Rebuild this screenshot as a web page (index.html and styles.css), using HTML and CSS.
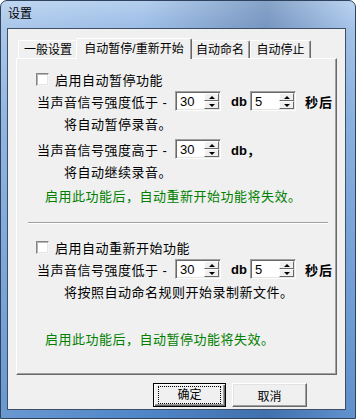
FILE: index.html
```html
<!DOCTYPE html>
<html lang="zh-CN">
<head>
    <meta charset="UTF-8">
    <title>设置</title>
    <link rel="stylesheet" href="styles.css">
</head>
<body>
    <div class="window">
        <div class="titlebar">设置</div>
        <div class="client">
            <div class="tabs">
                <div class="tab tab-general">一般设置</div>
                <div class="tab tab-pause active">自动暂停/重新开始</div>
                <div class="tab tab-name">自动命名</div>
                <div class="tab tab-stop">自动停止</div>
            </div>
            <div class="panel">
                <!-- auto pause -->
                <div class="check-row first"><span class="checkbox"></span>启用自动暂停功能</div>
                <div class="spin-row">
                    <span class="cond">当声音信号强度低于 -</span>
                    <span class="spinner"><span class="value">30</span><span class="spin-btn"><span class="up"></span><span class="down"></span></span></span>
                    <b class="unit">db</b>
                    <span class="spinner"><span class="value">5</span><span class="spin-btn"><span class="up"></span><span class="down"></span></span></span>
                    <b class="after">秒后</b>
                </div>
                <div class="note">将自动暂停录音。</div>
                <div class="spin-row">
                    <span class="cond">当声音信号强度高于 -</span>
                    <span class="spinner"><span class="value">30</span><span class="spin-btn"><span class="up"></span><span class="down"></span></span></span>
                    <b class="unit">db，</b>
                </div>
                <div class="note">将自动继续录音。</div>
                <div class="tip">启用此功能后，自动重新开始功能将失效。</div>

                <div class="separator"></div>

                <!-- auto restart -->
                <div class="check-row second"><span class="checkbox"></span>启用自动重新开始功能</div>
                <div class="spin-row">
                    <span class="cond">当声音信号强度低于 -</span>
                    <span class="spinner"><span class="value">30</span><span class="spin-btn"><span class="up"></span><span class="down"></span></span></span>
                    <b class="unit">db</b>
                    <span class="spinner"><span class="value">5</span><span class="spin-btn"><span class="up"></span><span class="down"></span></span></span>
                    <b class="after">秒后</b>
                </div>
                <div class="note">将按照自动命名规则开始录制新文件。</div>
                <div class="tip last">启用此功能后，自动暂停功能将失效。</div>
            </div>
            <div class="buttons">
                <button class="btn default"><span>确定</span></button>
                <button class="btn">取消</button>
            </div>
        </div>
    </div>
</body>
</html>
```

FILE: styles.css
```css
body {
  margin: 0;
  padding: 0;
  background: #ffffff;
  font-family: "Liberation Sans", "Noto Sans CJK SC", sans-serif;
  color: #000;
}

.window {
  width: 356px;
  height: 419px;
  box-sizing: border-box;
  border: 1px solid #2f435e;
  border-radius: 7px 7px 0 0;
  padding: 0 9px 8px 6px;
  display: flex;
  flex-direction: column;
  background: linear-gradient(to right, rgba(255, 255, 255, 0.15), rgba(255, 255, 255, 0) 40%, rgba(30, 60, 110, 0.3) 75%, rgba(255, 255, 255, 0.1)),
    linear-gradient(to bottom, #b4cfee 0, #9cbde6 27px, #7ea9dc 120px, #6596d2 280px, #4f86c8 100%);
}

.titlebar {
  height: 27px;
  line-height: 27px;
  padding-left: 1px;
  font-size: 12px;
  color: #000;
}

.client {
  flex: 1;
  background: #f0f0f0;
  border: 1px solid #3d4f66;
  display: flex;
  flex-direction: column;
}

/* tab strip */
.tabs {
  display: flex;
  align-items: flex-end;
  height: 20px;
  margin: 9px 0 0 10px;
  font-size: 12px;
}

.tab {
  height: 18px;
  line-height: 18px;
  box-sizing: border-box;
  text-align: center;
  background: #f0f0f0;
  border-top: 1px solid #ffffff;
  border-left: 1px solid #ffffff;
  border-right: 1px solid #696969;
  box-shadow: inset -1px 0 #a0a0a0;
  border-radius: 2px 2px 0 0;
  position: relative;
}

.tab-general { width: 60px; }
.tab-pause { width: 112px; }
.tab-name { width: 60px; }
.tab-stop { width: 61px; }

.tab.active {
  width: 116px;
  height: 21px;
  line-height: 20px;
  margin: 0 -2px -1px -2px;
  z-index: 2;
}

.panel {
  width: 321px;
  height: 317px;
  box-sizing: border-box;
  margin-left: 8px;
  border-top: 1px solid #ffffff;
  border-left: 1px solid #ffffff;
  border-right: 1px solid #696969;
  border-bottom: 1px solid #696969;
  box-shadow: inset -1px -1px #a0a0a0;
  font-size: 13px;
  letter-spacing: 0.5px;
}

.check-row {
  display: flex;
  align-items: center;
  height: 16px;
  margin-left: 19px;
}

.check-row.first { margin-top: 12px; }
.check-row.second { margin-top: 15px; }

.checkbox {
  width: 13px;
  height: 13px;
  box-sizing: border-box;
  margin-right: 6px;
  background: #ffffff;
  border: 1px solid;
  border-color: #858585 #f4f4f4 #f4f4f4 #858585;
  box-shadow: inset 1px 1px #b4b4b4, inset -1px -1px #e6e6e6;
}

.spin-row {
  display: flex;
  align-items: center;
  height: 20px;
  margin: 4px 0 0 20px;
}

.cond {
  width: 138px;
  white-space: nowrap;
}

.spinner {
  width: 46px;
  height: 20px;
  box-sizing: border-box;
  display: flex;
  align-items: center;
  background: #ffffff;
  border: 1px solid;
  border-color: #a0a0a0 #ffffff #ffffff #a0a0a0;
  box-shadow: inset 1px 1px #696969, inset -1px -1px #e3e3e3;
  padding: 1px;
}

.spinner .value {
  flex: 1;
  padding-left: 3px;
  font-size: 13px;
  letter-spacing: 0;
}

.spin-btn {
  width: 15px;
  height: 16px;
  display: flex;
  flex-direction: column;
}

.spin-btn .up,
.spin-btn .down {
  flex: 1;
  box-sizing: border-box;
  background: #f0f0f0;
  border: 1px solid;
  border-color: #ffffff #696969 #696969 #ffffff;
  display: flex;
  align-items: center;
  justify-content: center;
}

.spin-btn .up::after {
  content: "";
  border-left: 3px solid transparent;
  border-right: 3px solid transparent;
  border-bottom: 3px solid #000;
}

.spin-btn .down::after {
  content: "";
  border-left: 3px solid transparent;
  border-right: 3px solid transparent;
  border-top: 3px solid #000;
}

.unit {
  width: 29px;
  box-sizing: border-box;
  padding-left: 10px;
  font-weight: bold;
  letter-spacing: 0;
  white-space: nowrap;
}

.after {
  margin-left: 9px;
  font-weight: bold;
  letter-spacing: 1px;
}

.note {
  height: 20px;
  line-height: 20px;
  margin: 4px 0 0 47px;
}

.tip {
  height: 20px;
  line-height: 20px;
  margin: 4px 0 0 28px;
  color: #008000;
}

.tip.last { margin-top: 27px; }

.separator {
  width: 300px;
  height: 0;
  margin: 15px 0 0 11px;
  border-top: 1px solid #a0a0a0;
  border-bottom: 1px solid #ffffff;
}

/* dialog buttons */
.buttons {
  display: flex;
  margin: 8px 0 0 145px;
  gap: 6px;
}

.btn {
  width: 75px;
  height: 24px;
  box-sizing: border-box;
  padding: 0;
  font-family: "Liberation Sans", "Noto Sans CJK SC", sans-serif;
  font-size: 12px;
  color: #000;
  background: #f0f0f0;
  border: 1px solid;
  border-color: #ffffff #696969 #696969 #ffffff;
  box-shadow: inset -1px -1px #a0a0a0, inset 1px 1px #e3e3e3;
}

.btn.default {
  width: 73px;
  border: 1px solid #000;
  box-shadow: inset 1px 1px #ffffff, inset -1px -1px #696969, inset -2px -2px #a0a0a0;
}

.btn.default span {
  display: block;
  margin: 0 4px;
  line-height: 14px;
  border: 1px dotted #000;
  padding: 1px 0;
}
```
